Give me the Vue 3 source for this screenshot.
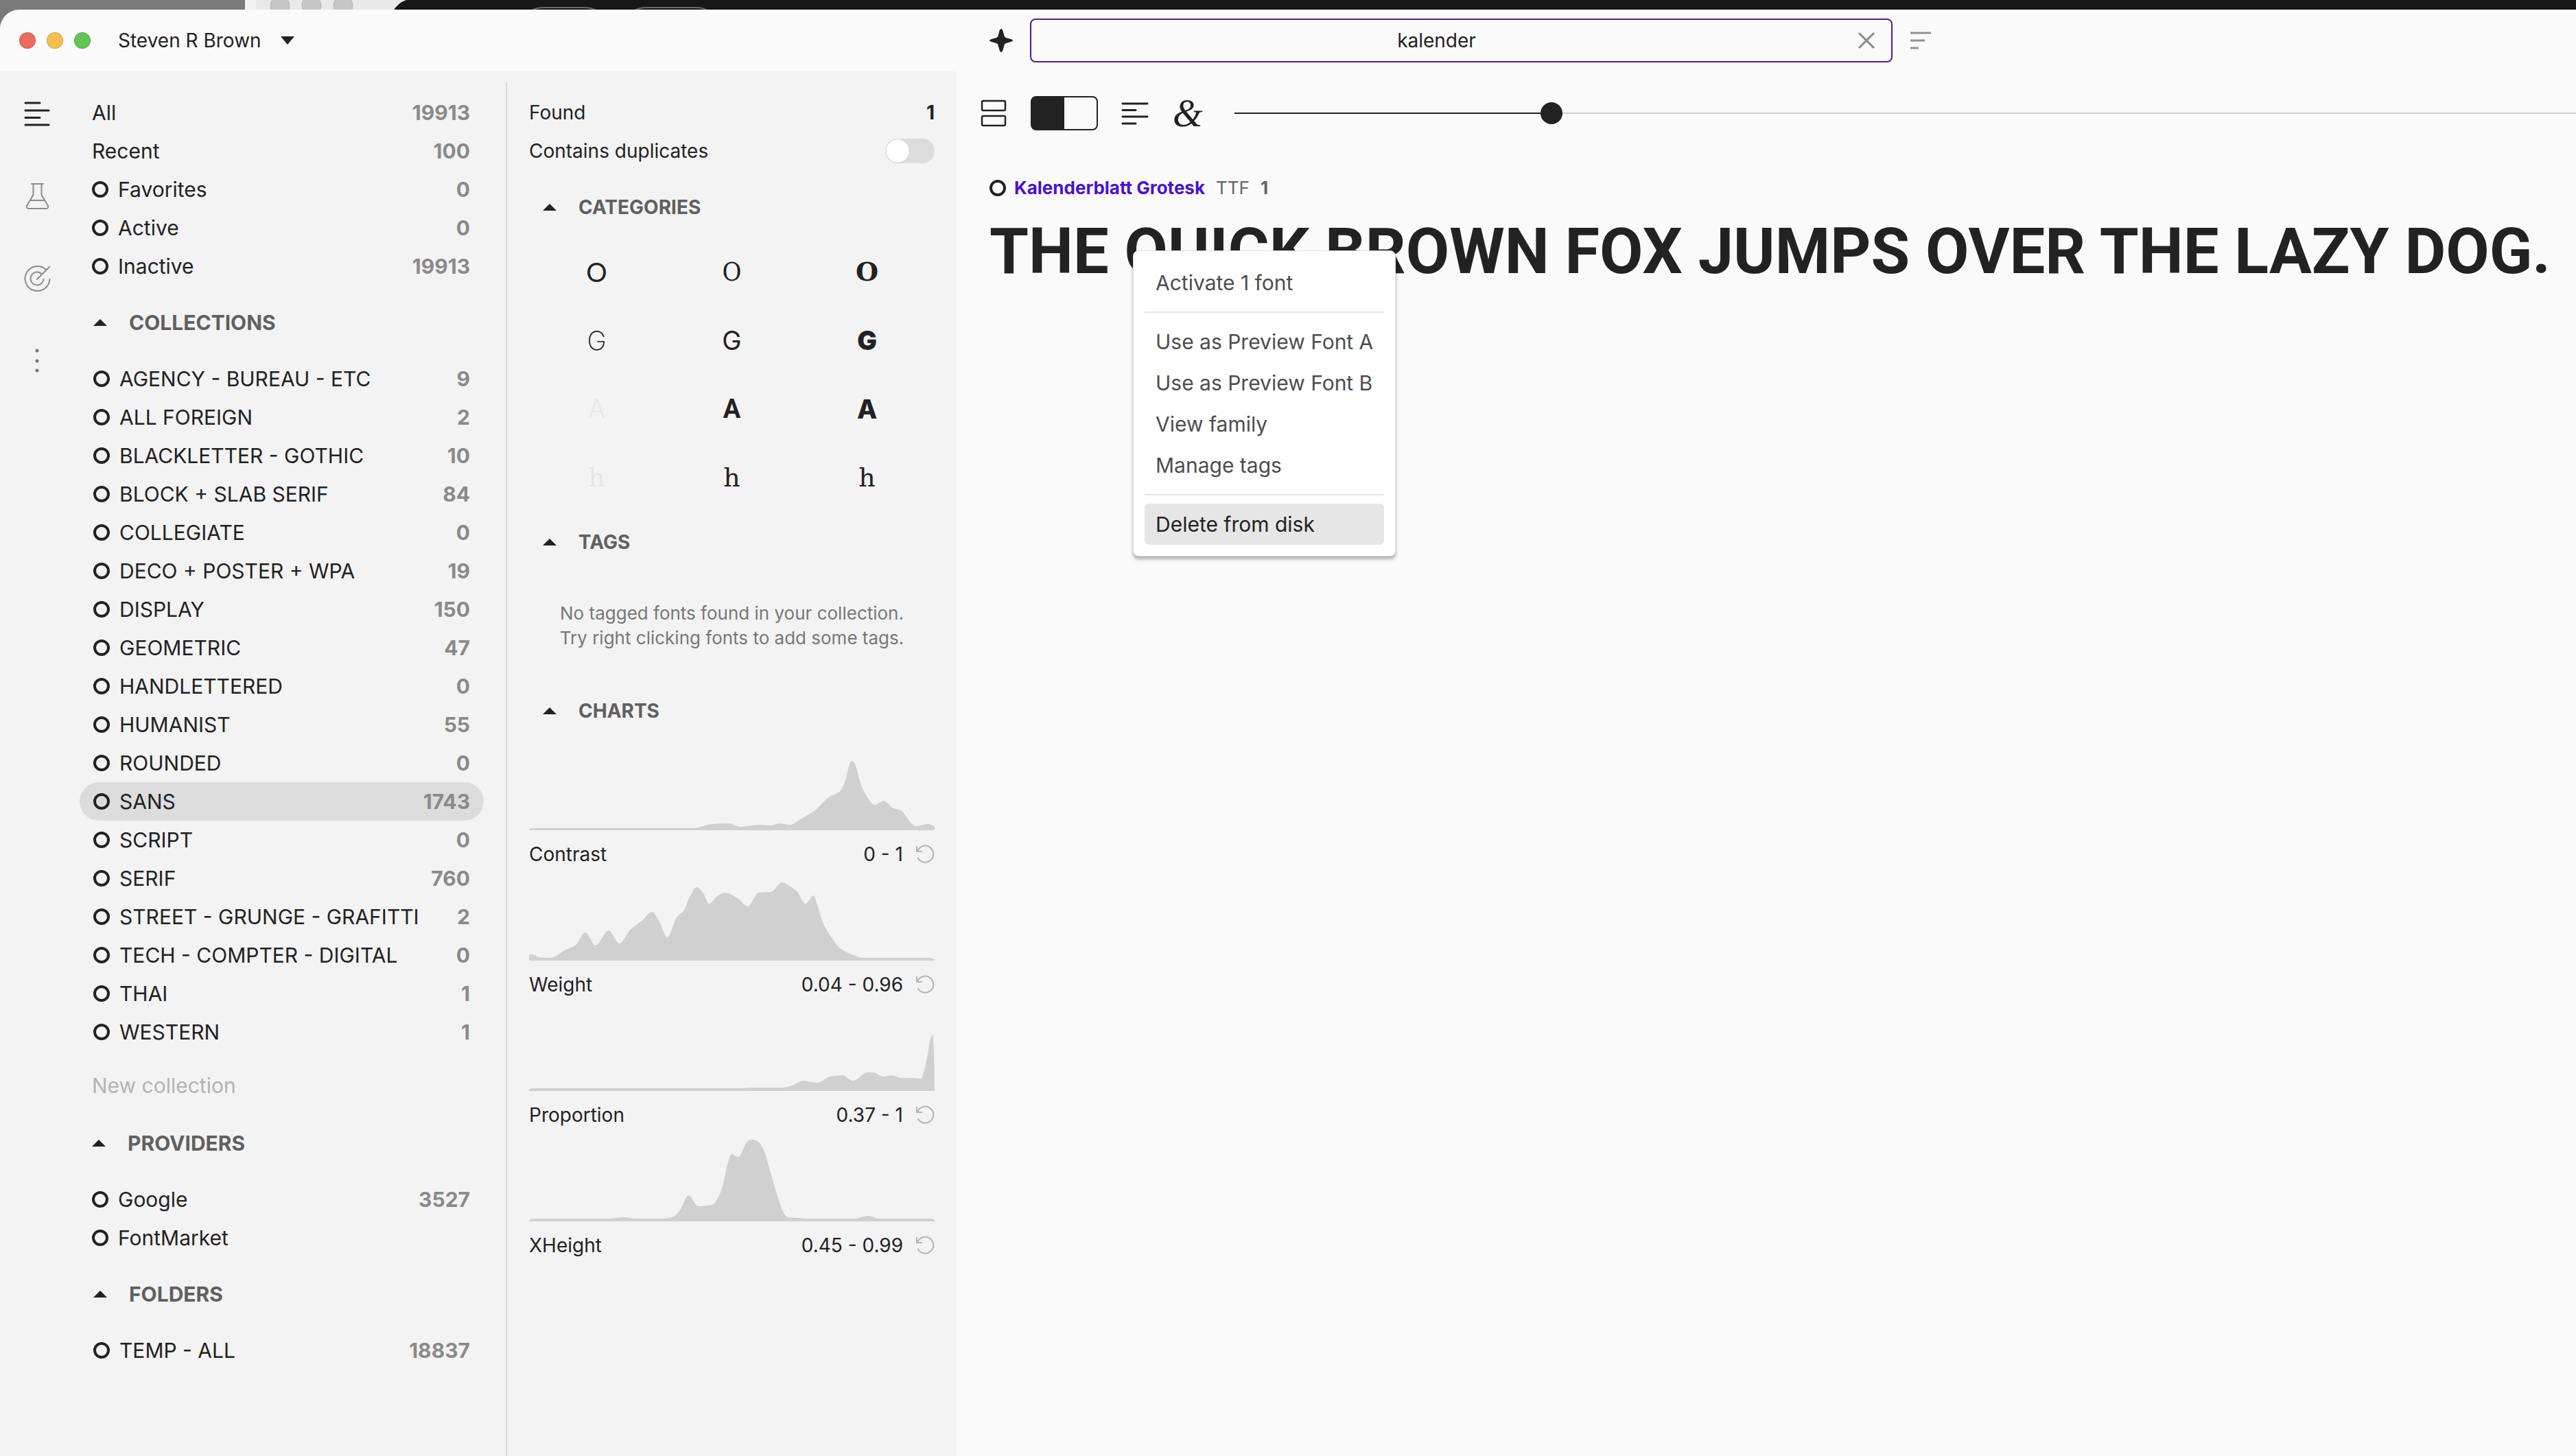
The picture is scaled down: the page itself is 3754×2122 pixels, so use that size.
<script setup>
import { ref, computed } from 'vue';

const query = ref('kalender');
const size = ref(23.2);
const duplicates = ref(false);
const selected = ref('SANS');

const totals = [
  { name: 'All', count: 19913, plain: true },
  { name: 'Recent', count: 100, plain: true },
  { name: 'Favorites', count: 0 },
  { name: 'Active', count: 0 },
  { name: 'Inactive', count: 19913 }
];

const collections = [
  { name: 'AGENCY - BUREAU - ETC', count: 9 },
  { name: 'ALL FOREIGN', count: 2 },
  { name: 'BLACKLETTER - GOTHIC', count: 10 },
  { name: 'BLOCK + SLAB SERIF', count: 84 },
  { name: 'COLLEGIATE', count: 0 },
  { name: 'DECO + POSTER + WPA', count: 19 },
  { name: 'DISPLAY', count: 150 },
  { name: 'GEOMETRIC', count: 47 },
  { name: 'HANDLETTERED', count: 0 },
  { name: 'HUMANIST', count: 55 },
  { name: 'ROUNDED', count: 0 },
  { name: 'SANS', count: 1743 },
  { name: 'SCRIPT', count: 0 },
  { name: 'SERIF', count: 760 },
  { name: 'STREET - GRUNGE - GRAFITTI', count: 2 },
  { name: 'TECH - COMPTER - DIGITAL', count: 0 },
  { name: 'THAI', count: 1 },
  { name: 'WESTERN', count: 1 }
];

const providers = [
  { name: 'Google', count: 3527 },
  { name: 'FontMarket' }
];

const folders = [{ name: 'TEMP - ALL', count: 18837 }];

const groups = [
  { id: 'totals', rows: totals },
  { id: 'collections', title: 'COLLECTIONS', rows: collections, inset: true, creatable: true },
  { id: 'providers', title: 'PROVIDERS', rows: providers },
  { id: 'folders', title: 'FOLDERS', rows: folders, inset: true }
];

const categories = [
  { glyph: 'O', look: 'round' },
  { glyph: 'O', look: 'modern' },
  { glyph: 'O', look: 'fat' },
  { glyph: 'G', look: 'thin' },
  { glyph: 'G', look: 'regular' },
  { glyph: 'G', look: 'black' },
  { glyph: 'A', look: 'narrow' },
  { glyph: 'A', look: 'medium' },
  { glyph: 'A', look: 'wide' },
  { glyph: 'h', look: 'small' },
  { glyph: 'h', look: 'book' },
  { glyph: 'h', look: 'tall' }
];

const CHART_H = 120;

// [x, height] samples of each distribution
const charts = [
  {
    name: 'Contrast',
    range: '0 - 1',
    points: [[0, 2], [5, 3], [241, 3], [270, 9], [294, 10], [311, 5], [341, 8], [356, 7], [368, 10], [385, 8], [398, 15], [422, 30], [441, 48], [458, 57], [464, 68], [475, 101], [479, 98], [487, 72], [496, 51], [509, 37], [522, 43], [536, 32], [547, 29], [564, 9], [570, 6], [587, 9], [597, 6]]
  },
  {
    name: 'Weight',
    range: '0.04 - 0.96',
    points: [[0, 8], [5, 9], [15, 5], [32, 4], [54, 16], [68, 22], [83, 41], [98, 22], [117, 44], [133, 25], [149, 45], [166, 58], [181, 71], [190, 60], [204, 34], [217, 63], [228, 73], [236, 92], [247, 107], [256, 99], [265, 83], [277, 94], [288, 99], [307, 91], [322, 79], [338, 99], [356, 100], [373, 114], [383, 109], [394, 101], [407, 83], [419, 95], [424, 82], [434, 52], [445, 34], [458, 18], [475, 9], [492, 4], [515, 4], [590, 4], [597, 2]]
  },
  {
    name: 'Proportion',
    range: '0.37 - 1',
    points: [[0, 2], [5, 4], [310, 4], [330, 5], [375, 5], [387, 8], [404, 15], [424, 12], [443, 21], [461, 23], [477, 15], [498, 27], [507, 27], [521, 21], [534, 23], [549, 19], [564, 19], [577, 18], [583, 35], [594, 82], [596, 60], [597, 0]]
  },
  {
    name: 'XHeight',
    range: '0.45 - 0.99',
    points: [[0, 2], [5, 4], [117, 4], [139, 6], [156, 4], [198, 4], [213, 7], [222, 16], [235, 38], [249, 22], [262, 23], [271, 25], [281, 40], [288, 64], [292, 83], [298, 98], [308, 94], [322, 117], [328, 119], [336, 117], [345, 105], [353, 80], [366, 36], [375, 12], [381, 6], [394, 5], [415, 4], [479, 4], [499, 8], [515, 4], [592, 4], [597, 2]]
  }
];

// monotone cubic, so the flat parts stay flat
const areaPath = (pts) => {
  const n = pts.length;
  const slope = [];
  for (let i = 0; i < n - 1; i++) {
    slope.push((pts[i + 1][1] - pts[i][1]) / (pts[i + 1][0] - pts[i][0]));
  }
  const m = pts.map((_, i) => {
    if (i === 0) return slope[0];
    if (i === n - 1) return slope[n - 2];
    const a = slope[i - 1];
    const b = slope[i];
    return a * b <= 0 ? 0 : (2 * a * b) / (a + b);
  });
  let d = `M0 ${CHART_H}L${pts[0][0]} ${CHART_H - pts[0][1]}`;
  for (let i = 0; i < n - 1; i++) {
    const [x0, y0] = pts[i];
    const [x1, y1] = pts[i + 1];
    const t = (x1 - x0) / 3;
    d += `C${x0 + t} ${CHART_H - y0 - m[i] * t} ${x1 - t} ${CHART_H - y1 + m[i + 1] * t} ${x1} ${CHART_H - y1}`;
  }
  return d + `L597 ${CHART_H}Z`;
};

const menu = [
  ['Activate 1 font'],
  ['Use as Preview Font A', 'Use as Preview Font B', 'View family', 'Manage tags'],
  ['Delete from disk']
];
const hovered = ref('Delete from disk');

const sliderFill = computed(() => ({ '--fill': size.value + '%' }));
</script>

<template>
  <div class="desktop">
    <svg class="behind" height="48" width="1100" viewBox="0 0 1100 48">
      <rect width="357" height="48" fill="#7a7a7a" />
      <rect x="357" width="240" height="48" fill="#e9e9e9" />
      <rect x="357" width="16" height="48" fill="#f2f2f2" />
      <g fill="#c6c6c6" stroke="#b4b4b4">
        <circle cx="408" cy="8" r="14" />
        <circle cx="454" cy="8" r="14" />
        <circle cx="500" cy="8" r="14" />
      </g>
      <path d="M573 16Q580 4 592 0H1100V48H573Z" fill="#171717" />
      <g fill="none" stroke="#6a6a6a" stroke-width="2">
        <path d="M774 16Q780 11 794 11H850Q864 11 869 16" />
        <path d="M924 16Q930 11 944 11H1012Q1026 11 1031 16" />
      </g>
    </svg>

    <div class="window">
      <header class="titlebar">
        <div class="title-left">
          <i class="light red"></i>
          <i class="light yellow"></i>
          <i class="light green"></i>
          <button class="account">
            Steven R Brown
            <svg width="20" height="12" viewBox="0 0 20 12"><path d="M0 0H20L10 12Z" fill="#222" /></svg>
          </button>
        </div>
        <div class="title-right">
          <button aria-label="Smart search">
            <svg width="34" height="34" viewBox="0 0 34 34">
              <path d="M17 0C18 0 19 1 19.500 3L21.500 10C22 12 22.500 12.500 24 13L31 15C33 15.500 34 16.200 34 17C34 17.800 33 18.500 31 19L24 21C22.500 21.500 22 22 21.500 24L19.500 31C19 33 18 34 17 34C16 34 15 33 14.500 31L12.500 24C12 22 11.500 21.500 10 21L3 19C1 18.500 0 17.800 0 17C0 16.200 1 15.500 3 15L10 13C11.500 12.500 12 12 12.500 10L14.500 3C15 1 16 0 17 0Z" fill="#222" />
            </svg>
          </button>
          <div class="search">
            <input v-model="query" type="text" aria-label="Search fonts" />
            <button aria-label="Clear search" @click="query = ''">
              <svg width="24" height="24" viewBox="0 0 24 24"><path d="M2 2L22 22M22 2L2 22" stroke="#888" stroke-width="3" stroke-linecap="round" /></svg>
            </button>
          </div>
          <button aria-label="Sort">
            <svg width="32" height="28" viewBox="0 0 32 28"><path d="M1 3H31M1 14H22M1 25H13" stroke="#919191" stroke-width="3" /></svg>
          </button>
        </div>
      </header>

      <div class="body">
        <nav class="rail">
          <button aria-label="Library">
            <svg width="40" height="40" viewBox="0 0 40 40"><path d="M3 4H24M3 15H37M3 25.500H24M3 36H37" stroke="#222" stroke-width="3" stroke-linecap="round" /></svg>
          </button>
          <button aria-label="Lab">
            <svg width="40" height="40" viewBox="0 0 40 40" fill="none" stroke="#8c8c8c" stroke-width="2" stroke-linecap="round" stroke-linejoin="round">
              <path d="M12 2H29M14.500 2V18L5 34Q4 38 8 38H33Q37 38 36 34L26.500 18V2M10 26H31" />
            </svg>
          </button>
          <button aria-label="Discover">
            <svg width="40" height="40" viewBox="0 0 40 40" fill="none" stroke="#8c8c8c" stroke-width="2" stroke-linecap="round">
              <path d="M33 7A18 18 0 1 0 38.500 21M27 13.500A9.500 9.500 0 1 0 29.500 21M20 21L38 3" />
            </svg>
          </button>
          <button aria-label="More">
            <svg width="40" height="40" viewBox="0 0 40 40" fill="#777"><circle cx="20" cy="5" r="2.500" /><circle cx="20" cy="20" r="2.500" /><circle cx="20" cy="34" r="2.500" /></svg>
          </button>
        </nav>

        <aside class="library">
          <section v-for="group in groups" :key="group.id" :class="{ inset: group.inset }">
            <button v-if="group.title" class="heading">
              <svg width="20" height="10" viewBox="0 0 20 10"><path d="M0 10L10 0L20 10Z" fill="#222" /></svg>
              {{ group.title }}
            </button>
            <button
              v-for="row in group.rows"
              :key="row.name"
              class="row"
              :class="{ selected: row.name === selected }"
              @click="selected = row.name"
            >
              <i v-if="!row.plain" class="ring"></i>
              <span class="name">{{ row.name }}</span>
              <b class="count">{{ row.count }}</b>
            </button>
            <input v-if="group.creatable" class="create" type="text" placeholder="New collection" aria-label="New collection" />
          </section>
        </aside>

        <aside class="filters">
          <div class="line">
            <span>Found</span>
            <b>1</b>
          </div>
          <label class="line">
            <span>Contains duplicates</span>
            <input v-model="duplicates" class="switch" type="checkbox" />
          </label>

          <button class="heading">
            <svg width="20" height="10" viewBox="0 0 20 10"><path d="M0 10L10 0L20 10Z" fill="#222" /></svg>
            CATEGORIES
          </button>
          <div class="categories">
            <button v-for="cat in categories" :key="cat.look" :class="cat.look">{{ cat.glyph }}</button>
          </div>

          <button class="heading">
            <svg width="20" height="10" viewBox="0 0 20 10"><path d="M0 10L10 0L20 10Z" fill="#222" /></svg>
            TAGS
          </button>
          <p class="empty">No tagged fonts found in your collection.<br />Try right clicking fonts to add some tags.</p>

          <button class="heading">
            <svg width="20" height="10" viewBox="0 0 20 10"><path d="M0 10L10 0L20 10Z" fill="#222" /></svg>
            CHARTS
          </button>
          <div v-for="chart in charts" :key="chart.name" class="chart">
            <svg class="area" :viewBox="`0 0 597 ${CHART_H}`" preserveAspectRatio="none"><path :d="areaPath(chart.points)" fill="#d0d0d0" /></svg>
            <div class="chart-label">
              <span>{{ chart.name }}</span>
              <span class="range">{{ chart.range }}</span>
              <button :aria-label="'Reset ' + chart.name">
                <svg width="28" height="28" viewBox="0 0 28 28" fill="none" stroke="#b3b3b3" stroke-width="2">
                  <path d="M2 2V10H10M3 9.500A12 12 0 1 1 3.500 19" />
                </svg>
              </button>
            </div>
          </div>
        </aside>

        <main class="results">
          <div class="toolbar">
            <button class="stack" aria-label="Layout">
              <svg width="38" height="40" viewBox="0 0 38 40" fill="none" stroke="#222" stroke-width="2.500"><rect x="2" y="2" width="34" height="14" rx="2" /><rect x="2" y="24" width="34" height="14" rx="2" /></svg>
            </button>
            <button class="contrast" aria-label="Swap colours"></button>
            <button class="align" aria-label="Alignment">
              <svg width="40" height="34" viewBox="0 0 40 34"><path d="M2 3H38M2 12.500H21M2 22H38M2 32H21" stroke="#222" stroke-width="3" stroke-linecap="round" /></svg>
            </button>
            <button class="glyphs" aria-label="Glyph features">&amp;</button>
            <input v-model="size" class="size" type="range" min="0" max="100" step="any" aria-label="Preview size" :style="sliderFill" />
          </div>

          <article class="font">
            <div class="font-head">
              <i class="ring"></i>
              <a href="#">Kalenderblatt Grotesk</a>
              <span>TTF</span>
              <b>1</b>
            </div>
            <p class="sample">THE QUICK BROWN FOX JUMPS OVER THE LAZY DOG.</p>
          </article>
        </main>
      </div>
    </div>

    <div class="menu" role="menu">
      <div v-for="(items, i) in menu" :key="i" class="menu-group">
        <button
          v-for="item in items"
          :key="item"
          role="menuitem"
          :class="{ hovered: item === hovered }"
          @mouseenter="hovered = item"
        >{{ item }}</button>
      </div>
    </div>
  </div>
</template>

<style>
body {
  background: #171717;
}
</style>

<style scoped>
.desktop {
  position: relative;
  min-height: 100vh;
  padding-top: 14px;
  box-sizing: border-box;
  display: flex;
  flex-direction: column;
  overflow: hidden;
  background: #171717;
  color: #222;
  font-family: Inter, "Liberation Sans", sans-serif;
  font-size: 28px;
  line-height: 36px;
}

.behind {
  position: absolute;
  top: 0;
  left: 0;
}

button,
input {
  font: inherit;
  color: inherit;
}

button {
  padding: 0;
  border: 0;
  background: none;
  text-align: left;
  cursor: pointer;
}

svg {
  display: block;
  flex: none;
}

.window {
  position: relative;
  flex: 1;
  display: flex;
  flex-direction: column;
  background: #fafafa;
  border-top-left-radius: 28px;
  overflow: hidden;
}

.titlebar {
  display: flex;
  height: 90px;
}

.title-left {
  flex: none;
  width: 1394px;
  box-sizing: border-box;
  padding-left: 28px;
  display: flex;
  align-items: center;
  gap: 16px;
}

.light {
  width: 24px;
  height: 24px;
  border-radius: 50%;
  box-sizing: border-box;
  border: 1px solid rgba(0, 0, 0, 0.15);
}

.red { background: #ed6a5f; }
.yellow { background: #f5bf4f; }
.green { background: #61c655; }

.account {
  display: flex;
  align-items: center;
  gap: 28px;
  margin-left: 24px;
}

.title-right {
  flex: 1;
  display: flex;
  align-items: center;
  padding-left: 48px;
  gap: 25px;
}

.search {
  flex: none;
  width: 34%;
  min-width: 1257px;
  height: 64px;
  box-sizing: border-box;
  display: flex;
  align-items: center;
  padding-right: 24px;
  border: 2px solid #4a1d9c;
  border-radius: 8px;
}

.search input {
  flex: 1;
  min-width: 0;
  padding: 0 24px 0 0;
  border: 0;
  outline: 0;
  background: none;
  text-align: center;
}

.body {
  flex: 1;
  display: flex;
}

.rail {
  flex: none;
  width: 116px;
  box-sizing: border-box;
  padding: 42px 0 0 34px;
  display: flex;
  flex-direction: column;
  gap: 80px;
  background: #f3f3f3;
}

.library {
  flex: none;
  width: 621px;
  box-sizing: border-box;
  padding: 32px 32px 0 0;
  background: #f3f3f3;
  font-size: 30px;
}

.row {
  display: flex;
  align-items: center;
  gap: 14px;
  width: 100%;
  height: 56px;
  padding: 0 20px 0 18px;
  border-radius: 28px;
}

.inset .row,
.inset .heading {
  padding-left: 20px;
}

.selected {
  background: #dcdcdc;
}

.ring {
  flex: none;
  width: 24px;
  height: 24px;
  box-sizing: border-box;
  border: 4px solid #222;
  border-radius: 50%;
}

.name {
  flex: 1;
  white-space: nowrap;
}

.count {
  color: #8a8a8a;
}

.heading {
  display: flex;
  align-items: center;
  gap: 32px;
  width: 100%;
  height: 108px;
  padding: 0 18px;
  color: #606060;
  font-weight: 700;
}

.filters .heading {
  padding-left: 20px;
}

.create {
  display: block;
  width: 100%;
  height: 56px;
  box-sizing: border-box;
  margin: 22px 0 2px;
  padding: 0 18px;
  border: 0;
  background: none;
}

.create::placeholder {
  color: #b3b3b3;
  opacity: 1;
}

.filters {
  flex: none;
  width: 657px;
  box-sizing: border-box;
  padding: 32px 32px 0 34px;
  background: linear-gradient(#dadada, #dadada) 0 16px / 2px 100% no-repeat #f3f3f3;
}

.line {
  display: flex;
  align-items: center;
  justify-content: space-between;
  height: 56px;
}

.switch {
  appearance: none;
  width: 72px;
  height: 36px;
  margin: 0;
  border-radius: 18px;
  background: radial-gradient(circle at 18px 18px, #fff 16px, transparent 17px) #dcdcdc;
}

.switch:checked {
  background: radial-gradient(circle at 54px 18px, #fff 16px, transparent 17px) #4a12d4;
}

.categories {
  display: grid;
  grid-template-columns: repeat(3, 1fr);
  grid-auto-rows: 80px;
  row-gap: 20px;
}

.categories button {
  text-align: center;
  font-size: 38px;
}

.categories .round { font-family: Lato, sans-serif; }
.categories .modern { font-family: "DejaVu Serif Condensed", "DejaVu Serif", serif; }
.categories .fat { font-family: "DejaVu Serif", serif; font-weight: 700; }
.categories .thin { font-weight: 200; }
.categories .regular { font-weight: 400; }
.categories .black { font-weight: 900; }
.categories .narrow { font-family: Roboto, sans-serif; font-weight: 300; color: #e6e6e6; }
.categories .medium { font-family: Roboto, sans-serif; font-weight: 700; }
.categories .wide { font-weight: 800; }
.categories .small { font-family: "DejaVu Serif", serif; color: #e6e6e6; }
.categories .book { font-family: "DejaVu Serif", serif; }
.categories .tall { font-family: "DejaVu Serif", serif; }

.empty {
  margin: 0;
  padding: 32px 0 34px;
  color: #777;
  font-size: 26px;
  text-align: center;
}

.area {
  width: 100%;
  height: 120px;
}

.chart-label {
  display: flex;
  align-items: center;
  height: 70px;
}

.range {
  margin-left: auto;
  padding-right: 18px;
}

.results {
  flex: 1;
  min-width: 0;
}

.toolbar {
  display: flex;
  align-items: center;
  height: 122px;
  padding-left: 35px;
}

.contrast {
  width: 98px;
  height: 50px;
  margin: 0 34px 0 35px;
  border: 2px solid #222;
  border-radius: 8px;
  background: linear-gradient(90deg, #222 50%, #fafafa 50%);
}

.glyphs {
  width: 40px;
  margin: 0 50px 0 35px;
  font-family: "Liberation Serif", serif;
  font-style: italic;
  font-size: 56px;
  line-height: 56px;
}

.size {
  appearance: none;
  flex: 1;
  min-width: 0;
  height: 32px;
  margin: 0;
  background: linear-gradient(90deg, #222 var(--fill), #cfcfcf var(--fill)) 0 50% / 100% 2px no-repeat;
}

.size::-webkit-slider-thumb {
  appearance: none;
  width: 32px;
  height: 32px;
  border: 0;
  border-radius: 50%;
  background: #222;
}

.font {
  padding-left: 48px;
}

.font-head {
  display: flex;
  align-items: center;
  height: 96px;
  font-size: 26px;
  color: #666;
}

.font-head a {
  margin: 0 16px 0 12px;
  color: #4a12d4;
  font-weight: 700;
  text-decoration: none;
}

.font-head b {
  margin-left: 16px;
}

.sample {
  margin: 0;
  font-family: Roboto, "Liberation Sans", sans-serif;
  font-size: 92px;
  line-height: 90px;
  font-weight: 700;
  white-space: nowrap;
}

.menu {
  position: absolute;
  left: 1651px;
  top: 365px;
  padding: 16px;
  border: 1px solid #dedede;
  border-radius: 8px;
  background: #fff;
  box-shadow: 0 4px 5px rgba(0, 0, 0, 0.3);
  font-size: 30px;
}

.menu-group + .menu-group {
  margin-top: 12px;
  padding-top: 12px;
  border-top: 2px solid #e6e6e6;
}

.menu button {
  display: block;
  width: 100%;
  height: 60px;
  padding: 0 16px;
  border-radius: 6px;
  color: #4d4d4d;
  white-space: nowrap;
}

.menu .hovered {
  background: #e6e6e6;
  color: #222;
}
</style>
